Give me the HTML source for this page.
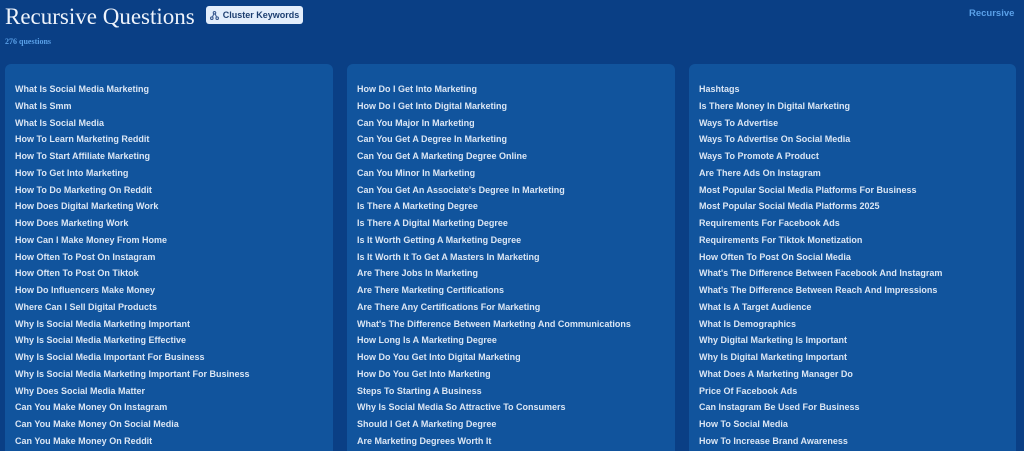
<!DOCTYPE html>
<html><head><style>
html,body{margin:0;width:1024px;height:451px;overflow:hidden}
body{background:#0a3f85;font-family:"Liberation Sans",sans-serif;position:relative}
h1{position:absolute;left:5px;top:4px;margin:0;font:23px "Liberation Serif",serif;color:#eef3fb;font-weight:normal}
.btn{position:absolute;left:206px;top:6px;width:97px;height:18px;background:#e3eefc;border-radius:3px;font-size:9px;font-weight:bold;color:#1c3e70;display:flex;align-items:center;justify-content:center;gap:4px}
.cnt{position:absolute;left:5px;top:37px;font:bold 8px "Liberation Serif",serif;color:#5aa0e8}
.rec{position:absolute;left:969px;top:8px;font-size:9.5px;font-weight:bold;color:#5aa0e8}
.card{position:absolute;top:64px;width:328px;height:400px;background:#11549d;border-radius:6px}
.card div{position:absolute;left:10px;font-size:9px;font-weight:bold;color:#dbe6f4;white-space:nowrap}
</style></head><body>
<h1>Recursive Questions</h1>
<div class="btn"><svg width="9" height="9" viewBox="0 0 10 10" fill="none" stroke="#3a5a90" stroke-width="1.2"><circle cx="5" cy="2" r="1.4"/><circle cx="2" cy="8" r="1.4"/><circle cx="8" cy="8" r="1.4"/><path d="M4.3 3.2 2.7 6.7M5.7 3.2 7.3 6.7"/></svg>Cluster Keywords</div>
<div class="cnt">276 questions</div>
<div class="rec">Recursive</div>
<div class="card" style="left:5px" id="c1"></div>
<div class="card" style="left:347px" id="c2"></div>
<div class="card" style="left:689px;width:327px" id="c3"></div>
<script>
var d=[["What Is Social Media Marketing","What Is Smm","What Is Social Media","How To Learn Marketing Reddit","How To Start Affiliate Marketing","How To Get Into Marketing","How To Do Marketing On Reddit","How Does Digital Marketing Work","How Does Marketing Work","How Can I Make Money From Home","How Often To Post On Instagram","How Often To Post On Tiktok","How Do Influencers Make Money","Where Can I Sell Digital Products","Why Is Social Media Marketing Important","Why Is Social Media Marketing Effective","Why Is Social Media Important For Business","Why Is Social Media Marketing Important For Business","Why Does Social Media Matter","Can You Make Money On Instagram","Can You Make Money On Social Media","Can You Make Money On Reddit"],
["How Do I Get Into Marketing","How Do I Get Into Digital Marketing","Can You Major In Marketing","Can You Get A Degree In Marketing","Can You Get A Marketing Degree Online","Can You Minor In Marketing","Can You Get An Associate's Degree In Marketing","Is There A Marketing Degree","Is There A Digital Marketing Degree","Is It Worth Getting A Marketing Degree","Is It Worth It To Get A Masters In Marketing","Are There Jobs In Marketing","Are There Marketing Certifications","Are There Any Certifications For Marketing","What's The Difference Between Marketing And Communications","How Long Is A Marketing Degree","How Do You Get Into Digital Marketing","How Do You Get Into Marketing","Steps To Starting A Business","Why Is Social Media So Attractive To Consumers","Should I Get A Marketing Degree","Are Marketing Degrees Worth It"],
["Hashtags","Is There Money In Digital Marketing","Ways To Advertise","Ways To Advertise On Social Media","Ways To Promote A Product","Are There Ads On Instagram","Most Popular Social Media Platforms For Business","Most Popular Social Media Platforms 2025","Requirements For Facebook Ads","Requirements For Tiktok Monetization","How Often To Post On Social Media","What's The Difference Between Facebook And Instagram","What's The Difference Between Reach And Impressions","What Is A Target Audience","What Is Demographics","Why Digital Marketing Is Important","Why Is Digital Marketing Important","What Does A Marketing Manager Do","Price Of Facebook Ads","Can Instagram Be Used For Business","How To Social Media","How To Increase Brand Awareness"]];
d.forEach(function(a,i){var c=document.getElementById('c'+(i+1));a.forEach(function(t,j){var e=document.createElement('div');e.textContent=t;e.style.top=(20+j*16.76)+'px';c.appendChild(e);});});
</script>
</body></html>
